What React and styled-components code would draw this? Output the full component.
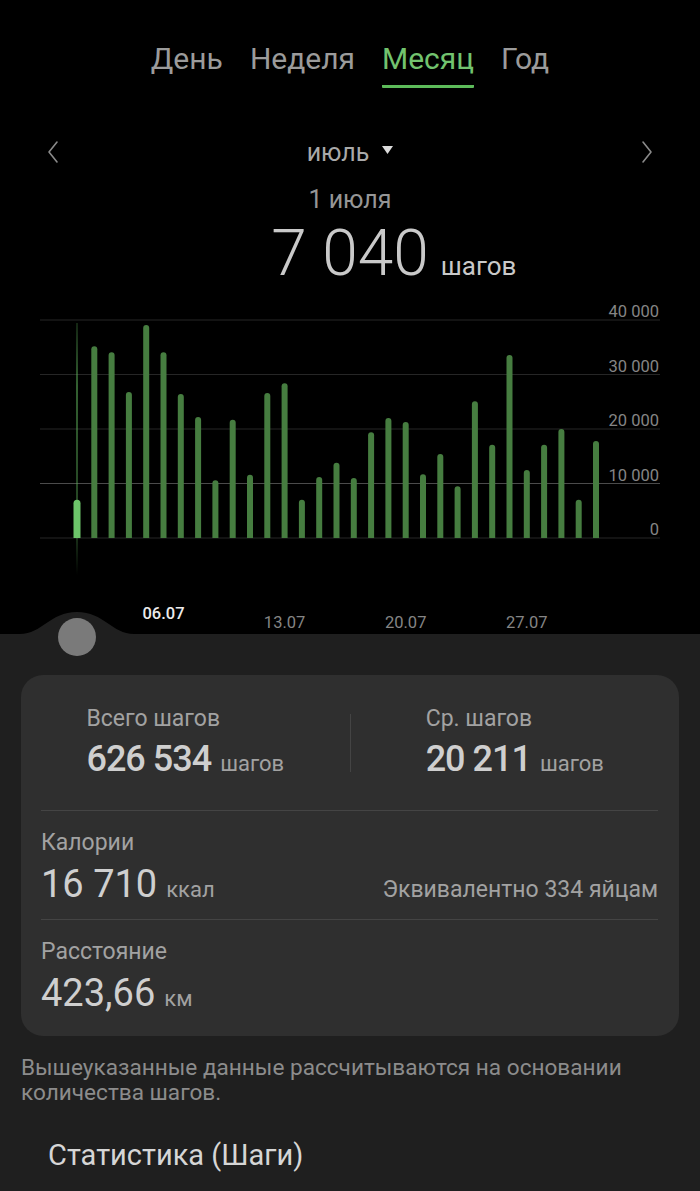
import React from 'react';
import styled, { createGlobalStyle } from 'styled-components';

const GlobalStyle = createGlobalStyle`
  html, body {
    margin: 0;
    padding: 0;
    background: #1f1f1f;
    font-family: Roboto, "Noto Sans", sans-serif;
  }
`

// steps per day, july
const days = [7040, 35200, 34100, 26800, 39100, 34100, 26400, 22200, 10600, 21700, 11600, 26600, 28400, 7000, 11200, 13800,
  11000, 19400, 22000, 21300, 11700, 15400, 9500, 25100, 17100, 33600, 12500, 17100, 20000, 7000, 17800]

const tabs = ['День', 'Неделя', 'Месяц', 'Год']

const BASE = 538
const SCALE = 218 / 40000
const barX = (i) => 77 + i * 17.3

function barPath(x, top, w) {
    const r = w / 2
    return `M${x - r} ${BASE} V${top + r} A${r} ${r} 0 0 1 ${x + r} ${top + r} V${BASE} Z`
}

function Chart() {
    const grid = [0, 10000, 20000, 30000, 40000]
    return (
        <ChartSvg viewBox="0 294 700 340" width="700" height="340">
            <defs>
                <linearGradient id="sel" x1="0" y1="323" x2="0" y2="575" gradientUnits="userSpaceOnUse">
                    <stop offset="0" stopColor="#5fb35b" stopOpacity="0.35" />
                    <stop offset="0.25" stopColor="#5fb35b" stopOpacity="0.9" />
                    <stop offset="0.8" stopColor="#5fb35b" stopOpacity="0.6" />
                    <stop offset="1" stopColor="#5fb35b" stopOpacity="0" />
                </linearGradient>
            </defs>
            {grid.map((g) => {
                const y = BASE - g * SCALE
                return (
                    <g key={g}>
                        <line x1="40" x2="660" y1={y} y2={y} stroke={g === 10000 ? '#4b4b4b' : '#262626'} strokeWidth="1" />
                        <text x="659" y={y - 3} textAnchor="end" fontSize="16.5" fill="#858585" fontFamily="Roboto, sans-serif">
                            {g === 0 ? '0' : `${g / 1000} 000`}
                        </text>
                    </g>
                )
            })}
            <line x1="77" x2="77" y1="323" y2="575" stroke="url(#sel)" strokeWidth="1.2" />
            {days.map((v, i) => {
                const sel = i === 0
                return (
                    <path key={i} d={barPath(barX(i), BASE - v * SCALE, sel ? 7 : 6)} fill={sel ? '#6cc469' : '#467d40'} />
                )
            })}
            {[5, 12, 19, 26].map((i) => (
                <text key={i} x={barX(i)} y={i === 5 ? 619 : 628} textAnchor="middle" fontSize="16.5"
                    fontWeight={i === 5 ? 500 : 400} fill={i === 5 ? '#ececec' : '#858585'} fontFamily="Roboto, sans-serif">
                    {String(i + 1).padStart(2, '0')}.07
                </text>
            ))}
        </ChartSvg>
    )
}

function Chevron({ dir }) {
    return (
        <svg width="12" height="24" viewBox="0 0 12 24">
            <polyline points={dir === 'left' ? '10,2 2,12 10,22' : '2,2 10,12 2,22'} fill="none" stroke="#8a8a8a" strokeWidth="1.6" strokeLinejoin="round" strokeLinecap="round" />
        </svg>
    )
}

export default function App() {
    return (
        <>
            <GlobalStyle />
            <Screen>
                <Top>
                    <Tabs>
                        {tabs.map((t) => <Tab key={t} active={t === 'Месяц'}>{t}</Tab>)}
                    </Tabs>
                    <MonthNav>
                        <Chevron dir="left" />
                        <MonthPicker>
                            июль
                            <svg width="11" height="8" viewBox="0 0 11 8"><polygon points="0,0 11,0 5.5,8" fill="#dcdcdc" /></svg>
                        </MonthPicker>
                        <Chevron dir="right" />
                    </MonthNav>
                    <DateLabel>1 июля</DateLabel>
                    <Headline>
                        <span />
                        <BigValue>7 040</BigValue>
                        <BigUnit>шагов</BigUnit>
                    </Headline>
                    <Chart />
                </Top>

                <Panel>
                    <Knob width="116" height="46" viewBox="0 0 116 46">
                        <path d="M0 22 C22 22 30 0 57 0 C84 0 92 22 114 22 L116 22 L116 46 L0 46 Z" fill="#1f1f1f" />
                        <circle cx="57" cy="25" r="19" fill="#7a7a7a" />
                    </Knob>
                    <Card>
                        <SummaryRow>
                            <SummaryCell>
                                <div>
                                    <Label>Всего шагов</Label>
                                    <SummaryValue>626 534<Unit>шагов</Unit></SummaryValue>
                                </div>
                            </SummaryCell>
                            <VDivider />
                            <SummaryCell>
                                <div>
                                    <Label>Ср. шагов</Label>
                                    <SummaryValue>20 211<Unit>шагов</Unit></SummaryValue>
                                </div>
                            </SummaryCell>
                        </SummaryRow>
                        <StatRow>
                            <Label>Калории</Label>
                            <StatLine>
                                <StatValue>16 710<Unit>ккал</Unit></StatValue>
                                <Hint>Эквивалентно 334 яйцам</Hint>
                            </StatLine>
                        </StatRow>
                        <StatRow last>
                            <Label>Расстояние</Label>
                            <StatLine>
                                <StatValue>423,66<Unit>км</Unit></StatValue>
                            </StatLine>
                        </StatRow>
                    </Card>
                    <Note>Вышеуказанные данные рассчитываются на основании количества шагов.</Note>
                    <SectionTitle>Статистика (Шаги)</SectionTitle>
                </Panel>
            </Screen>
        </>
    )
}

const Screen = styled.div`
    width: 700px;
    min-height: 100vh;
    display: flex;
    flex-direction: column;
`

const Top = styled.section`
    background: #000;
    padding-top: 42px;
    display: flex;
    flex-direction: column;
`

const Tabs = styled.nav`
    display: flex;
    justify-content: center;
    gap: 27px;
`

const Tab = styled.div`
    font-size: 30px;
    line-height: 34px;
    padding-bottom: 9px;
    color: ${(p) => (p.active ? '#72c36e' : '#9b9b9b')};
    border-bottom: 3px solid ${(p) => (p.active ? '#5dbb5a' : 'transparent')};
    border-radius: 1px;
`

const MonthNav = styled.div`
    margin-top: 44px;
    height: 40px;
    padding: 0 47px;
    display: flex;
    align-items: center;
    justify-content: space-between;
`

const MonthPicker = styled.div`
    display: flex;
    align-items: center;
    gap: 13px;
    font-size: 25px;
    color: #a9a9a9;

    svg {
        margin-top: -4px;
    }
`

const DateLabel = styled.div`
    margin-top: 14px;
    text-align: center;
    font-size: 25px;
    line-height: 28px;
    color: #969696;
`

const Headline = styled.div`
    margin-top: 8px;
    display: grid;
    grid-template-columns: 1fr auto 1fr;
    align-items: baseline;
    color: #c9c9c9;
`

const BigValue = styled.span`
    font-size: 64px;
    line-height: 64px;
    font-weight: 300;
`

const BigUnit = styled.span`
    margin-left: 12px;
    font-size: 26px;
`

const ChartSvg = styled.svg`
    display: block;
    margin-top: 8px;
`

const Panel = styled.section`
    position: relative;
    flex: 1;
    background: #1f1f1f;
    padding-bottom: 20px;
`

const Knob = styled.svg`
    position: absolute;
    top: -22px;
    left: 20px;
`

const Card = styled.div`
    margin: 41px 21px 0;
    background: #2f2f2f;
    border-radius: 22px;
    padding: 0 21px 0 20px;
`

const SummaryRow = styled.div`
    height: 135px;
    display: grid;
    grid-template-columns: 1fr 1px 1fr;
    align-items: center;
    margin: 0 -21px 0 -20px;
`

const SummaryCell = styled.div`
    display: flex;
    justify-content: center;
`

const VDivider = styled.div`
    width: 1px;
    height: 58px;
    background: #444;
`

const Label = styled.div`
    font-size: 23px;
    line-height: 26px;
    color: #a2a2a2;
`

const SummaryValue = styled.div`
    margin-top: 7px;
    font-size: 36px;
    line-height: 40px;
    font-weight: 500;
    letter-spacing: -1px;
    color: #cfcfcf;
`

const Unit = styled.span`
    margin-left: 9px;
    font-size: 22px;
    line-height: 1;
    font-weight: 400;
    letter-spacing: 0;
    color: #a2a2a2;
`

const StatRow = styled.div`
    border-top: 1px solid #444;
    padding: 19px 0 ${(p) => (p.last ? '23px' : '15px')};
`

const StatLine = styled.div`
    margin-top: 8px;
    height: 40px;
    display: flex;
    align-items: baseline;
    justify-content: space-between;
`

const StatValue = styled.div`
    font-size: 38px;
    line-height: 40px;
    color: #cfcfcf;
`

const Hint = styled.div`
    font-size: 23px;
    line-height: 1;
    color: #a2a2a2;
`

const Note = styled.p`
    margin: 19px 20px 0 21px;
    font-size: 22.6px;
    line-height: 25px;
    color: #8c8c8c;
`

const SectionTitle = styled.h2`
    margin: 34px 0 0 48px;
    font-size: 29px;
    line-height: 32px;
    font-weight: 400;
    color: #d6d6d6;
`
